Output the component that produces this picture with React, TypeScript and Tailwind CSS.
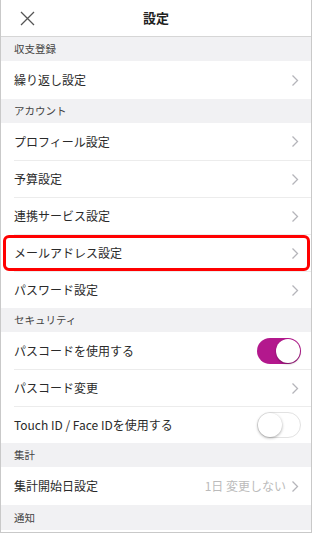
type Row = {
    label: string
    value?: string
    toggle?: boolean
    on?: boolean
    highlight?: boolean
    tall?: boolean
}

type Section = { title: string; rows: Row[]; tallHeader?: boolean }

const sections: Section[] = [
    { title: '収支登録', rows: [{ label: '繰り返し設定', tall: true }] },
    {
        title: 'アカウント',
        rows: [
            { label: 'プロフィール設定' },
            { label: '予算設定' },
            { label: '連携サービス設定' },
            { label: 'メールアドレス設定', highlight: true },
            { label: 'パスワード設定' },
        ],
    },
    {
        title: 'セキュリティ',
        rows: [
            { label: 'パスコードを使用する', toggle: true, on: true },
            { label: 'パスコード変更' },
            { label: 'Touch ID / Face IDを使用する', toggle: true, on: false },
        ],
    },
    { title: '集計', rows: [{ label: '集計開始日設定', value: '1日 変更しない', tall: true }] },
    { title: '通知', rows: [], tallHeader: true },
]

function Chevron() {
    return (
        <svg width="8" height="13" viewBox="0 0 8 13" fill="none" className="mr-[2px]">
            <path d="M1.5 1.5 L6.5 6.5 L1.5 11.5" stroke="#b5b5ba" strokeWidth="1.3" />
        </svg>
    )
}

function Toggle({ on }: { on: boolean }) {
    if (on) {
        return (
            <div className="w-[44px] h-[26px] rounded-full bg-[#b3188d] flex items-center justify-end pr-[1px]">
                <div className="w-[24px] h-[24px] rounded-full bg-white shadow-[0_1px_2px_rgba(0,0,0,0.35)]" />
            </div>
        )
    }
    return (
        <div className="w-[44px] h-[26px] rounded-full bg-white border border-[#e2e2e2] flex items-center">
            <div className="w-[24px] h-[24px] rounded-full bg-white shadow-[0_1px_3px_rgba(0,0,0,0.35)]" />
        </div>
    )
}

export default function App() {
    return (
        <div
            className="w-[312px] h-[533px] bg-white border-x border-b border-[#c9c9c9] overflow-hidden text-[#2a2a2a]"
            style={{ fontFamily: '"Noto Sans CJK JP", "Noto Sans", sans-serif' }}
        >
            {/* header */}
            <div className="h-[37px] border-b border-[#d6d6d6] flex items-center relative">
                <svg width="15" height="15" viewBox="0 0 15 15" className="absolute left-[19px] top-[11px]">
                    <path d="M1 1 L14 14 M14 1 L1 14" stroke="#555" strokeWidth="1.3" />
                </svg>
                <div className="flex-1 text-center text-[13px] font-bold text-[#222]">設定</div>
            </div>

            {sections.map((s) => (
                <div key={s.title}>
                    <div
                        className={`${s.tallHeader ? 'h-[25px]' : 'h-[24px]'} bg-[#f1f1f3] flex items-center pl-[13px] text-[10.5px] text-[#444]`}
                    >
                        {s.title}
                    </div>
                    {s.rows.map((r, i) => (
                        <div key={r.label} className="relative">
                            {i > 0 && <div className="ml-[13px] h-px bg-[#ececec]" />}
                            <div
                                className={`${r.tall ? 'h-[38px]' : i > 0 ? 'h-[36px]' : 'h-[37px]'} flex items-center pl-[13px] pr-[10px] text-[12px]`}
                            >
                                <span className="flex-1">{r.label}</span>
                                {r.toggle ? (
                                    <Toggle on={!!r.on} />
                                ) : (
                                    <div className="flex items-center gap-[5px]">
                                        {r.value && <span className="text-[#bbb] text-[12px]">{r.value}</span>}
                                        <Chevron />
                                    </div>
                                )}
                            </div>
                            {r.highlight && (
                                <div className="absolute left-[2px] right-[1px] top-[1px] bottom-0 border-[3px] border-[#f00] rounded-[6px]" />
                            )}
                        </div>
                    ))}
                </div>
            ))}
        </div>
    )
}
